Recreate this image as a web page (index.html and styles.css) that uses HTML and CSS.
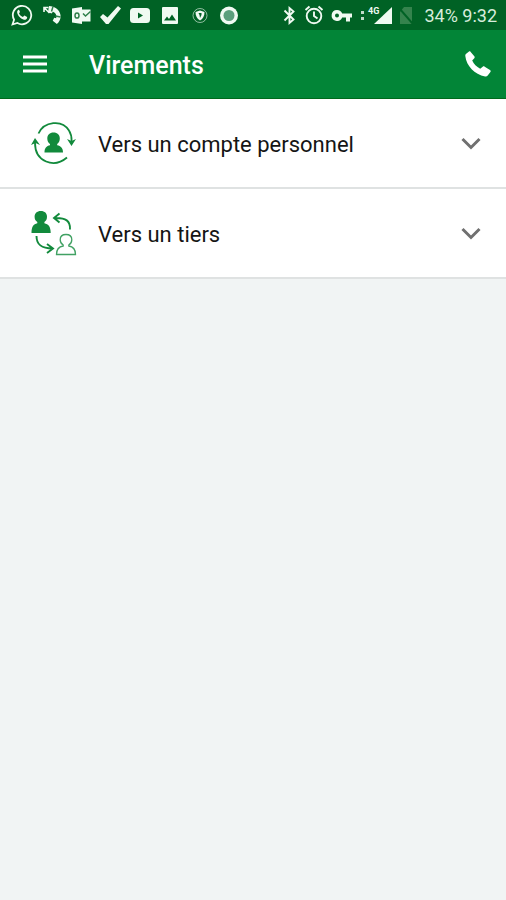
FILE: index.html
```html
<!DOCTYPE html>
<html lang="fr">
<head>
<meta charset="utf-8">
<meta name="viewport" content="width=device-width, initial-scale=1">
<title>Virements</title>
<link rel="stylesheet" href="styles.css">
</head>
<body>
<div class="status">
  <div class="notifications">
    <svg width="22" height="22" viewBox="0 0 22 22" aria-hidden="true"><path d="M1.500 20.500l1.600-4.800A9.200 9.200 0 1 1 6.400 19z" fill="none" stroke="currentColor" stroke-width="1.800"/><path d="M7.600 5.800c-1.200.7-1.600 1.800-1.400 3 .7 3.200 3.600 6.100 6.800 6.900 1.400.3 2.700-.3 3.100-1.700v-1l-2.700-1.500-1.500 1.500c-2-.8-3.200-2.200-3.900-3.800l1-1.300-1-2.100z" fill="currentColor"/></svg>
    <svg width="21" height="22" viewBox="0 0 21 22" aria-hidden="true"><path d="M8 2c5.500 0 10.500 3.500 11.500 9 .6 3.600-1 7-3.600 9l-4.200-3.300 1.500-3 2 .5c.8-2.800-.6-5.400-3.200-6.400L10.500 9.500 7 8z" fill="currentColor"/><path d="M3 8V3.500h4.500M3.500 4l4.500 4.500 4-3" fill="none" stroke="currentColor" stroke-width="1.600"/><path d="M12 2.500l-1.500 5M19.500 13l-5-1" class="cut"/></svg>
    <svg width="22" height="22" viewBox="0 0 22 22" aria-hidden="true"><path d="M2 4.500L12 3v17L2 18.500z" fill="currentColor"/><path d="M12 5.500h8.500v12H12z" fill="currentColor"/><ellipse cx="7" cy="11.500" rx="2" ry="2.600" class="cut"/><path d="M13 9.500l2.500 2.500 5-4.500" class="cut"/></svg>
    <svg width="21" height="22" viewBox="0 0 21 22" aria-hidden="true"><path d="M0 13l3-3 4.500 3.500L18 2l3 2.500L8.500 20H6z" fill="currentColor"/></svg>
    <svg width="22" height="22" viewBox="0 0 22 22" aria-hidden="true"><rect x="1" y="4" width="20" height="15" rx="3.500" fill="currentColor"/><path d="M9 8.500v6l5-3z" class="hole"/></svg>
    <svg width="21" height="22" viewBox="0 0 21 22" aria-hidden="true"><rect x="3" y="3" width="16" height="17" rx="1" fill="currentColor"/><path d="M5 16.500l3-4 2 2.500 3-4.500 4 6z" class="hole"/></svg>
    <svg width="22" height="22" viewBox="0 0 22 22" aria-hidden="true"><circle cx="12" cy="11.500" r="7" fill="none" stroke="currentColor" opacity=".6"/><path d="M7.500 8l4.500-1.500L16.500 8c0 4-1.500 6.500-4.500 8.500C9 14.500 7.500 12 7.500 8z" fill="currentColor"/><path d="M10.500 9h3v2l-1.500 3-.500-3z" class="hole"/></svg>
    <svg width="21" height="22" viewBox="0 0 21 22" aria-hidden="true"><circle cx="11" cy="11.500" r="9" fill="currentColor"/><circle cx="11" cy="11.500" r="5.500" class="disc"/></svg>
  </div>
  <div class="system">
    <svg width="15" height="22" viewBox="0 0 15 22" aria-hidden="true"><path d="M2.500 6.500l9 9L7.500 19V4l4 3.500-9 9" fill="none" stroke="currentColor" stroke-width="1.900"/></svg>
    <svg width="20" height="22" viewBox="0 0 20 22" aria-hidden="true"><g fill="none" stroke="currentColor" stroke-width="1.900"><circle cx="10" cy="12" r="7.300"/><path d="M1.500 6l4-3.500M18.500 6l-4-3.500M10 7.500V12l3.500 2.500"/></g></svg>
    <svg width="22" height="22" viewBox="0 0 22 22" aria-hidden="true"><path d="M6 6a5.500 5.500 0 0 1 5.200 3.600H21v4h-2v4h-4v-4h-3.800A5.500 5.500 0 1 1 6 6zm0 3.500a2 2 0 1 0 0 4 2 2 0 0 0 0-4z" fill="currentColor" fill-rule="evenodd"/></svg>
    <svg width="32" height="22" viewBox="0 0 32 22" aria-hidden="true"><path d="M1 7h3v3H1zM1 13h3v3H1z" fill="currentColor" opacity=".8"/><path d="M32 3v17H14z" fill="currentColor"/><text x="8" y="10" class="network">4G</text></svg>
    <svg width="14" height="22" viewBox="0 0 14 22" aria-hidden="true"><path d="M5 3h8v17H1V8z" class="sim"/><path d="M0 4l14 16" class="slash"/></svg>
    <span class="clock">34% 9:32</span>
  </div>
</div>
<header class="appbar">
  <button class="icon-button" aria-label="Menu"><svg width="24" height="18" viewBox="0 0 24 18"><path d="M0 2h24M0 9h24M0 16h24" stroke="currentColor" stroke-width="2.800"/></svg></button>
  <h1 class="title">Virements</h1>
  <button class="icon-button" aria-label="Appeler"><svg width="26" height="26" viewBox="0 0 26 26"><path d="M5.500.7l3.800 4.500c.6.8.5 1.400 0 2L7.200 9.500c1.600 3.600 4.300 6.300 8 8.200l2.500-2c.7-.5 1.300-.5 2 0l5.300 3.200c.8.6.9 1.200.4 2l-2.700 3.500c-.7.9-1.500 1.200-2.600 1C9.500 23.600 1.500 15 .3 5c-.1-1.200.3-2 1.200-2.600L4 .6c.6-.4 1-.4 1.500.1z" fill="currentColor"/></svg></button>
</header>
<main class="list">
  <button class="row">
    <svg class="row-icon" width="46" height="46" viewBox="0 0 46 46" aria-hidden="true">
      <g fill="none" stroke="currentColor" stroke-width="1.800"><path d="M7.500 12.500C13 .5 31-2 38 9.500c1.800 2.800 2.700 6 2.600 10.500"/><path d="M4 22c0 19 19 25.500 32 14.500"/></g>
      <path d="M36 18l4.500 2 4.500-2-4.500 7zM0 24l4-7 5 7-4.500-2z" fill="currentColor"/>
      <path d="M22.500 11.500c4 0 6.300 2.500 6.300 6 0 2.500-1 4.300-2.600 5.400v1.300c3.600.8 5.800 2.700 5.800 7.300H13.500c0-4.600 2-6.500 5.500-7.300v-1.300c-1.700-1.100-2.700-2.900-2.700-5.400 0-3.500 2.300-6 6.200-6z" fill="currentColor"/>
    </svg>
    <span class="label">Vers un compte personnel</span>
    <svg width="20" height="14" viewBox="0 0 20 14" class="chevron" aria-hidden="true"><path d="M1.500 2l8.500 8.500L18.500 2"/></svg>
  </button>
  <button class="row">
    <svg class="row-icon" width="46" height="46" viewBox="0 0 46 46" aria-hidden="true">
      <path d="M9.800 0c4 0 6.200 2.300 6.200 5.800 0 2.400-1 4.200-2.600 5.200v1.200c4 .9 6.300 3.300 6.300 9.800H.5c0-6.500 2-8.900 5.800-9.800V11c-1.700-1-2.700-2.800-2.700-5.200C3.600 2.300 5.900 0 9.800 0z" fill="currentColor"/>
      <g fill="none" stroke="currentColor" stroke-width="1.900"><path d="M39 18.500C39.500 10 35 6.500 23.500 7M28.500 2.500L23 7l5.500 4.500"/><path d="M5.500 25c0 9 5 12.500 16 12.500M16 33l6 4.500-6 4.500"/></g>
      <path d="M35 23.500c3.800 0 5.800 2.200 5.800 5.300 0 2.500-1.200 4.200-3 5.200v1c4.300.6 6.700 2.700 6.700 8.500h-19c0-5.800 2.400-7.900 6.700-8.500v-1c-1.800-1-3-2.700-3-5.200 0-3.100 2-5.300 5.800-5.300z" fill="none" stroke="currentColor" stroke-width="1.300" opacity=".8"/>
    </svg>
    <span class="label">Vers un tiers</span>
    <svg width="20" height="14" viewBox="0 0 20 14" class="chevron" aria-hidden="true"><path d="M1.500 2l8.500 8.500L18.500 2"/></svg>
  </button>
</main>
</body>
</html>
```
FILE: styles.css
```css
* {
  box-sizing: border-box;
}

body {
  margin: 0;
  background: #f1f4f4;
  color: #151515;
  font-family: Roboto, "Liberation Sans", sans-serif;
}

svg {
  display: block;
  flex: none;
}

button {
  border: 0;
  font: inherit;
  color: inherit;
  cursor: pointer;
}

.status {
  display: flex;
  justify-content: space-between;
  align-items: center;
  height: 30px;
  padding: 0 9px 0 11px;
  background: #006225;
  color: #f0faf2;
}

.notifications {
  display: flex;
  gap: 8px;
}

.system {
  display: flex;
  align-items: center;
  gap: 7px;
}

.clock {
  margin-left: 4px;
  padding-top: 2px;
  font-size: 18px;
  line-height: 22px;
  white-space: nowrap;
  color: #d8ecdc;
}

.cut {
  fill: none;
  stroke: #2f7f4a;
  stroke-width: 1.5;
}

.hole {
  fill: #006225;
}

.disc {
  fill: #5b9f7c;
}

.network {
  font-size: 9px;
  font-weight: 700;
  fill: currentColor;
}

.sim {
  fill: #35834d;
}

.slash {
  stroke: #006225;
  stroke-width: 2;
}

.appbar {
  display: flex;
  align-items: center;
  height: 69px;
  padding: 0 15px 0 23px;
  background: #028537;
  border-bottom: 1px solid #006a1c;
  color: #fff;
}

.icon-button {
  padding: 0;
  background: none;
}

.title {
  flex: 1;
  margin: 0;
  padding: 3px 0 0 42px;
  font-size: 25px;
  font-weight: 500;
  line-height: 32px;
}

.list {
  box-shadow: inset 0 2px 1px #e2efe6;
}

.row {
  display: flex;
  align-items: center;
  width: 100%;
  height: 90px;
  padding: 2px 25px 0 31px;
  background: none;
  background-image: linear-gradient(#fff, #fff);
  background-origin: border-box;
  border-bottom: 2px solid #dfe2e2;
  text-align: left;
}

.row-icon {
  color: #128a3c;
}

.label {
  flex: 1;
  padding: 2px 0 0 21px;
  font-size: 22px;
  line-height: 30px;
}

.chevron {
  fill: none;
  stroke: #707070;
  stroke-width: 3;
}
```
